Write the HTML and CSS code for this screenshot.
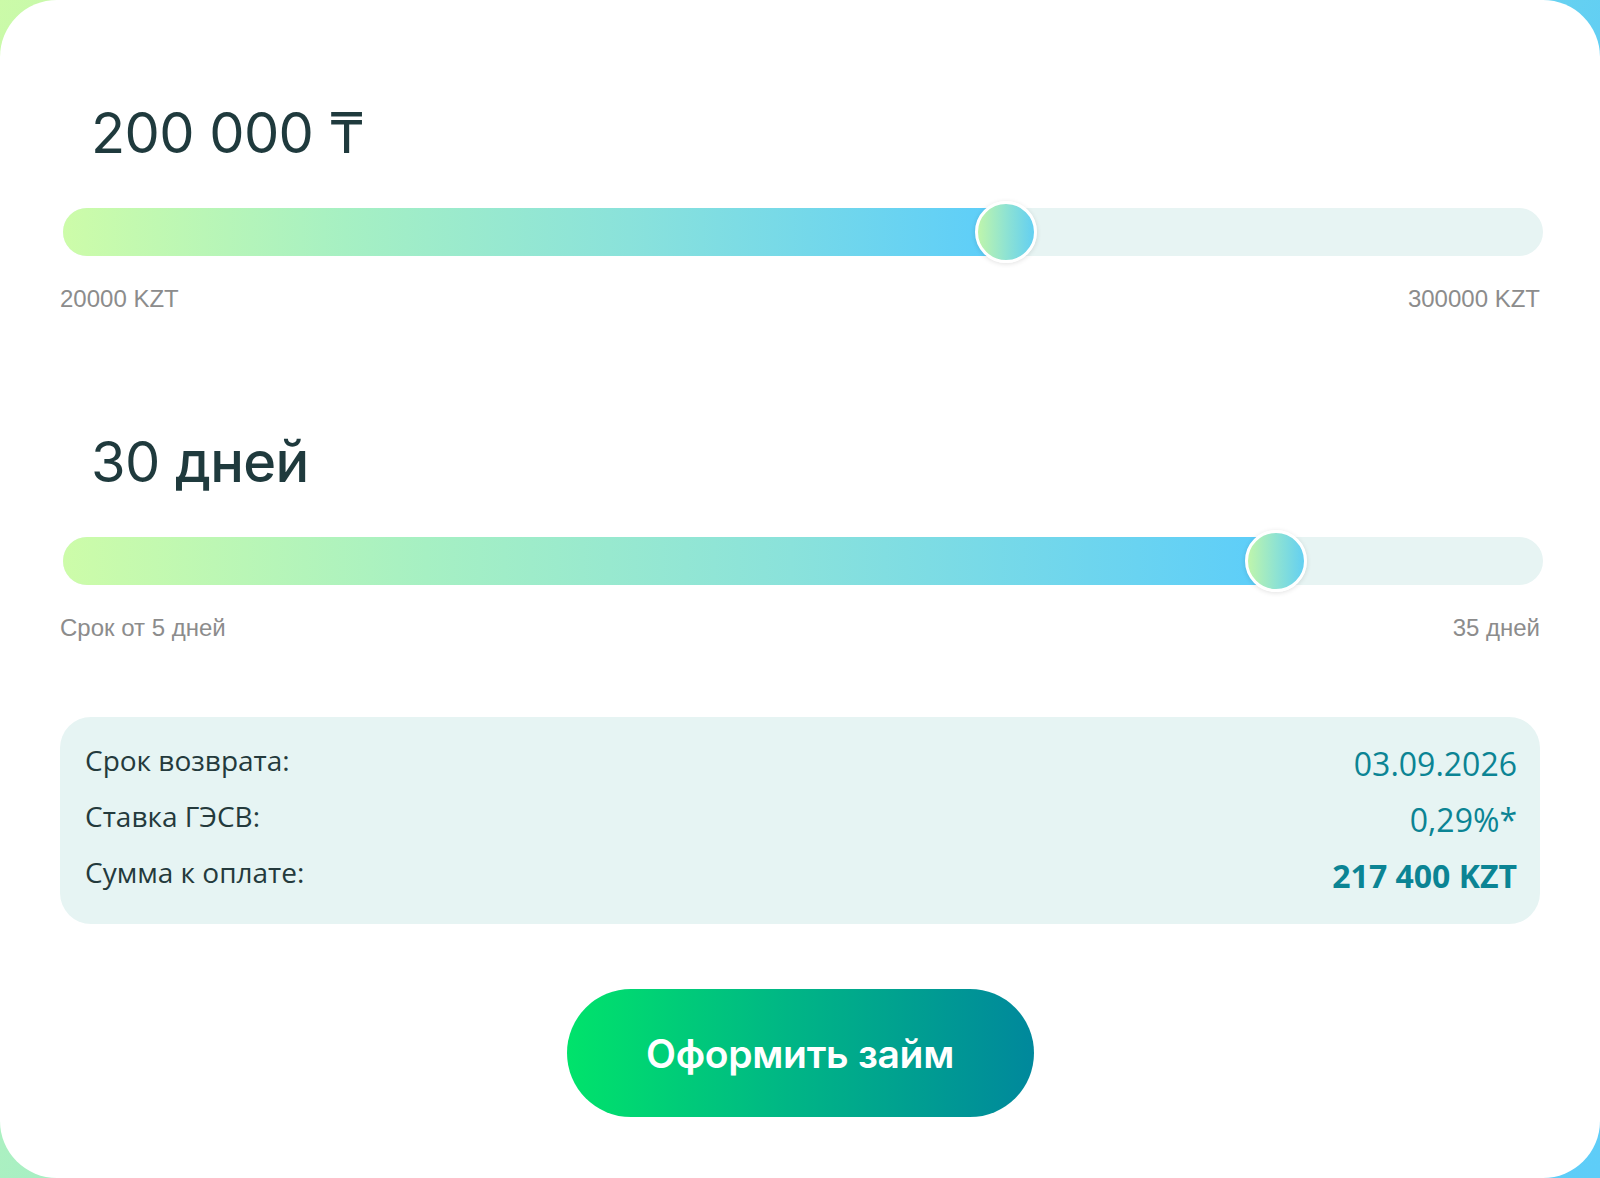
FILE: index.html
```html
<!DOCTYPE html>
<html lang="ru">
<head>
    <meta charset="UTF-8">
    <meta name="viewport" content="width=device-width, initial-scale=1.0">
    <title>Калькулятор займа</title>
    <link rel="stylesheet" href="styles.css">
</head>
<body>
    <div class="card">
        <section class="slider-block">
            <div class="slider-value">200 000 ₸</div>
            <div class="range" style="--p: 0.6429;">
                <div class="range-fill"></div>
                <div class="range-thumb"></div>
            </div>
            <div class="range-limits">
                <span>20000 KZT</span>
                <span>300000 KZT</span>
            </div>
        </section>

        <section class="slider-block slider-block-term">
            <div class="slider-value">30 <span class="unit">дней</span></div>
            <div class="range" style="--p: 0.8333;">
                <div class="range-fill"></div>
                <div class="range-thumb"></div>
            </div>
            <div class="range-limits">
                <span>Срок от 5 дней</span>
                <span>35 дней</span>
            </div>
        </section>

        <div class="summary">
            <div class="summary-row">
                <span class="summary-label">Срок возврата:</span>
                <span class="summary-value">03.09.2026</span>
            </div>
            <div class="summary-row">
                <span class="summary-label">Ставка ГЭСВ:</span>
                <span class="summary-value">0,29%*</span>
            </div>
            <div class="summary-row">
                <span class="summary-label">Сумма к оплате:</span>
                <span class="summary-value summary-total">217 400 KZT</span>
            </div>
        </div>

        <div class="actions">
            <button class="submit-btn">Оформить займ</button>
        </div>
    </div>
</body>
</html>
```

FILE: styles.css
```css
html, body {
    margin: 0;
    padding: 0;
}

body {
    height: 1178px;
    overflow: hidden;
    background: linear-gradient(115deg, #cbfaa8 0%, #9eeccb 35%, #62cff3 75%, #5ecdf8 100%);
    font-family: 'Inter', 'Noto Sans', sans-serif;
}

.card {
    box-sizing: border-box;
    height: 1178px;
    background: #fff;
    border-radius: 57px;
    padding: 105px 60px 0;
}

.slider-value {
    padding-left: 31px;
    font-size: 56px;
    line-height: 56px;
    font-weight: 400;
    letter-spacing: -0.6px;
    color: #1f3a3d;
    margin-bottom: 47px;
}

.slider-value .unit {
    font-weight: 500;
}

.slider-block-term {
    margin-top: 123px;
}

.range {
    position: relative;
    height: 48px;
    margin: 0 -3px 0 3px;
    border-radius: 24px;
    background: #e7f4f3;
}

.range-fill {
    height: 100%;
    width: calc(31px + var(--p) * (100% - 62px));
    border-radius: 24px 0 0 24px;
    background: linear-gradient(90deg, #cdfca9 0%, #a6f0c3 30%, #8ae2db 60%, #5ccdfa 100%);
}

.range-thumb {
    position: absolute;
    top: -7px;
    left: calc(var(--p) * (100% - 62px));
    box-sizing: border-box;
    width: 62px;
    height: 62px;
    border-radius: 50%;
    border: 3px solid #fff;
    background: linear-gradient(90deg, #bff5ab 0%, #8fe3d2 50%, #63cff2 100%);
    box-shadow: 0 1px 5px rgba(0, 0, 0, 0.12);
}

.range-limits {
    display: flex;
    justify-content: space-between;
    margin-top: 31px;
    font-family: 'Liberation Sans', Arial, sans-serif;
    font-size: 24px;
    line-height: 24px;
    color: #8c8c8c;
}

.summary {
    margin-top: 77px;
    padding: 25px 23px 26px 25px;
    border-radius: 31px;
    background: #e6f4f3;
    display: flex;
    flex-direction: column;
    gap: 12px;
    font-family: 'Open Sans', 'Noto Sans', sans-serif;
}

.summary-row {
    display: flex;
    justify-content: space-between;
    align-items: flex-start;
}

.summary-label {
    font-size: 28px;
    line-height: 36px;
    color: #243a3c;
}

.summary-value {
    font-size: 32px;
    line-height: 44px;
    color: #0b8494;
}

.summary-total {
    font-weight: 700;
}

.actions {
    display: flex;
    justify-content: center;
    margin-top: 65px;
}

.submit-btn {
    width: 467px;
    height: 128px;
    border: none;
    border-radius: 64px;
    background: linear-gradient(90deg, #00e36b 0%, #00b884 45%, #00889c 100%);
    color: #fff;
    font-family: 'Inter', 'Noto Sans', sans-serif;
    font-size: 39px;
    font-weight: 600;
    letter-spacing: -0.3px;
    cursor: pointer;
}
```
